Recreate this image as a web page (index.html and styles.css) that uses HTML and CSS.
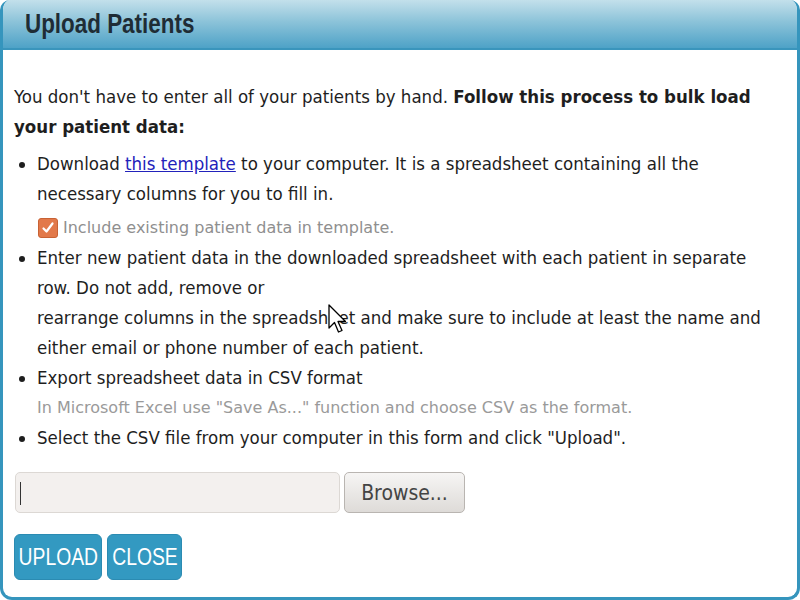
FILE: index.html
```html
<!DOCTYPE html>
<html lang="en">
<head>
  <meta charset="UTF-8">
  <title>Upload Patients</title>
  <link rel="stylesheet" href="styles.css">
</head>
<body>

<div class="dialog">
  <div class="dialog-header"><span class="title">Upload Patients</span></div>
  <div class="dialog-body">
    <p class="intro">You don't have to enter all of your patients by hand. <b>Follow this process to bulk load your patient data:</b></p>

    <ul class="steps">
      <li>
        Download <a href="#">this template</a> to your computer. It is a spreadsheet containing all the necessary columns for you to fill in.
        <label class="include">
          <span class="check">
            <svg width="14" height="14" viewBox="0 0 14 14"><path d="M2.5 7.5 L5.5 10.5 L11.5 2.5" fill="none" stroke="#fff" stroke-width="2.2" stroke-linecap="round" stroke-linejoin="round"/></svg>
          </span>
          Include existing patient data in template.
        </label>
      </li>
      <li>Enter new patient data in the downloaded spreadsheet with each patient in separate row. Do not add, remove or<br>rearrange columns in the spreadsheet and make sure to include at least the name and either email or phone number of each patient.</li>
      <li>
        Export spreadsheet data in CSV format
        <div class="hint">In Microsoft Excel use "Save As..." function and choose CSV as the format.</div>
      </li>
      <li>Select the CSV file from your computer in this form and click "Upload".</li>
    </ul>

    <div class="file-row">
      <div class="file-name"><span class="caret"></span></div>
      <button class="browse">Browse...</button>
    </div>

    <div class="actions">
      <button class="btn btn-upload"><span>UPLOAD</span></button>
      <button class="btn btn-close"><span>CLOSE</span></button>
    </div>
  </div>

  <!-- mouse pointer left over the list -->
  <svg class="pointer" width="20" height="30" viewBox="0 0 20 30">
    <path d="M1 1 L1 24 L6.5 18.5 L10.5 28 L14 26.5 L10 17.5 L17.5 17.5 Z" fill="#fff" stroke="#000" stroke-width="1.3" stroke-linejoin="round"/>
  </svg>
</div>

</body>
</html>
```

FILE: styles.css
```css
body {
  margin: 0;
  padding: 0;
  background: #fff;
}

.dialog {
  position: relative;
  width: 800px;
  height: 600px;
  box-sizing: border-box;
  border: 3px solid #3595bd;
  border-top: none;
  border-radius: 10px 10px 12px 12px;
  overflow: hidden;
  background: #fff;
  font-family: "DejaVu Sans Condensed", "DejaVu Sans", sans-serif;
  font-stretch: condensed;
  color: #1e1e1e;
}

.dialog-header {
  height: 50px;
  margin: 0 -3px;
  padding-left: 25px;
  box-sizing: border-box;
  background: linear-gradient(to bottom, #c3e0eb 0%, #8cc3d9 45%, #4ea2c7 100%);
  border-bottom: 2px solid #3a95bc;
}

.title {
  display: inline-block;
  font-family: "Liberation Sans", Arial, sans-serif;
  font-weight: bold;
  font-size: 27px;
  line-height: 48px;
  color: #1f2c35;
  transform: scaleX(0.83);
  transform-origin: left center;
}

.dialog-body {
  padding: 32px 25px 0 11px;
  font-size: 18.5px;
  line-height: 30px;
}

.intro {
  margin: 0 0 7px 0;
}

.steps {
  margin: 0;
  padding-left: 23px;
}

.steps li {
  margin: 0;
}

.steps a {
  color: #2222bb;
}

.include {
  display: flex;
  align-items: center;
  gap: 5px;
  margin: 3px 0 0 1px;
  font-family: "DejaVu Sans", sans-serif;
  font-stretch: normal;
  font-size: 16px;
  line-height: 31px;
  color: #8f8f8f;
}

.check {
  display: inline-flex;
  align-items: center;
  justify-content: center;
  width: 18px;
  height: 18px;
  background: #e2794a;
  border: 1px solid #c86234;
  border-radius: 3px;
}

.hint {
  font-family: "DejaVu Sans", sans-serif;
  font-stretch: normal;
  font-size: 16px;
  line-height: 30px;
  color: #9a9a9a;
}

.file-row {
  display: flex;
  gap: 4px;
  margin: 19px 0 0 1px;
}

.file-name {
  width: 325px;
  height: 41px;
  box-sizing: border-box;
  background: #f3f0ee;
  border: 1px solid #dcd8d4;
  border-radius: 5px;
  padding: 9px 4px;
}

.caret {
  display: block;
  width: 1px;
  height: 23px;
  background: #333;
}

.browse {
  width: 121px;
  height: 41px;
  background: linear-gradient(to bottom, #f6f5f4, #dedbd8);
  border: 1px solid #b9b5b1;
  border-radius: 5px;
  font-family: "DejaVu Sans Condensed", "DejaVu Sans", sans-serif;
  font-stretch: condensed;
  font-size: 21px;
  color: #444;
  padding: 0;
}

.actions {
  display: flex;
  gap: 5px;
  margin: 21px 0 0 0;
}

.btn {
  display: flex;
  align-items: center;
  justify-content: center;
  height: 46px;
  padding: 0;
  background: #3399c1;
  border: 1px solid #2b8bb2;
  border-radius: 6px;
  color: #fff;
  font-family: "Liberation Sans", Arial, sans-serif;
  font-size: 23px;
  overflow: hidden;
}

.btn span {
  display: inline-block;
  transform: scaleX(0.84);
}

.btn-upload {
  width: 88px;
}

.btn-close {
  width: 75px;
}

.pointer {
  position: absolute;
  left: 325px;
  top: 304px;
}
```
